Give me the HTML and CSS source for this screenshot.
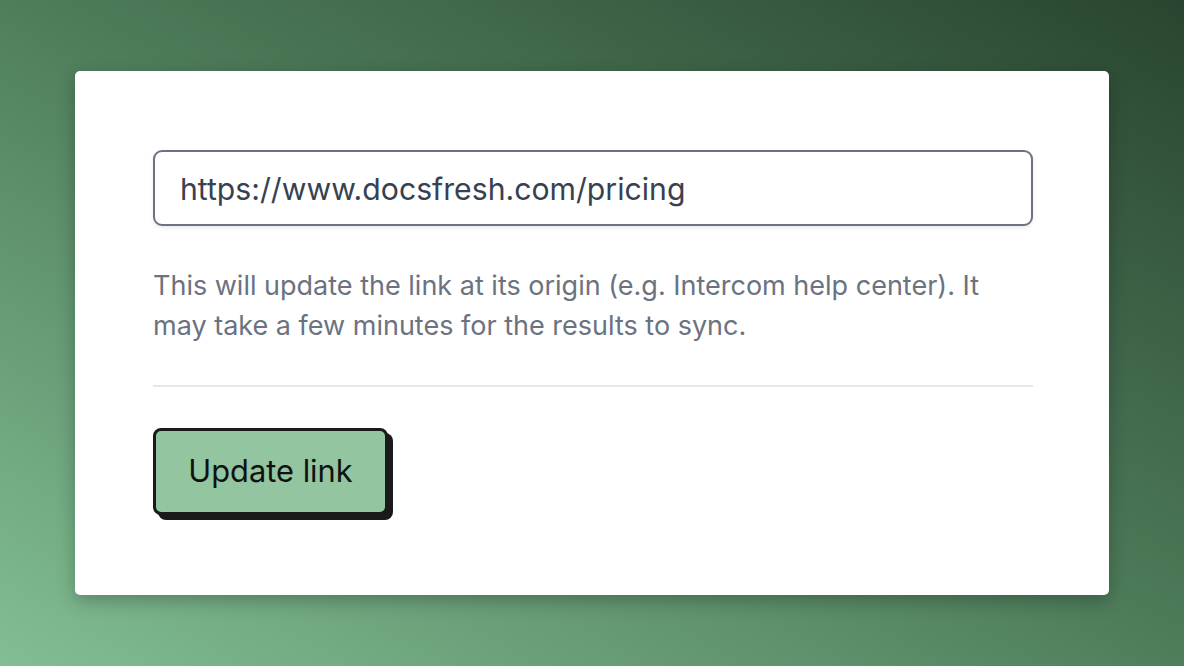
FILE: index.html
```html
<!DOCTYPE html>
<html lang="en">
<head>
<meta charset="utf-8">
<title>Update link</title>
<link rel="stylesheet" href="styles.css">
</head>
<body>
<main class="card">
  <input class="url-input" type="text" value="https://www.docsfresh.com/pricing">
  <p class="hint">This will update the link at its origin (e.g. Intercom help center). It may take a few minutes for the results to sync.</p>
  <hr class="divider">
  <div class="actions">
    <button class="btn" type="button">Update link</button>
  </div>
</main>
</body>
</html>
```
FILE: styles.css
```css
* { box-sizing: border-box; }
html, body { height: 100%; }
body {
  margin: 0;
  font-family: Inter, "Noto Sans", "Liberation Sans", sans-serif;
  background: linear-gradient(to top right, #82be93 0%, #4f7e5c 50%, #29452f 100%);
  display: flex;
  align-items: center;
  justify-content: center;
}
.card {
  width: 1034px;
  height: 524px;
  background: #fff;
  border-radius: 5px;
  box-shadow: 0 6px 18px rgba(0,0,0,0.25);
  padding: 79px 76px 0 78px;
  display: flex;
  flex-direction: column;
}
.url-input {
  width: 880px;
  height: 76px;
  border: 2px solid #6b7280;
  border-radius: 9px;
  padding: 2px 25px 0;
  font-family: inherit;
  font-size: 30.2px;
  color: #374151;
  box-shadow: 0 2px 4px rgba(0,0,0,0.08);
  outline: none;
}
.hint {
  margin: 40px 0 0;
  font-size: 27px;
  line-height: 40px;
  color: #6b7280;
}
.divider {
  margin: 39px 0 0;
  border: 0;
  height: 2px;
  background: #e5e7eb;
}
.actions {
  margin-top: 41px;
  display: flex;
}
.btn {
  width: 235px;
  height: 87px;
  background: #93c5a0;
  border: 3px solid #1a1a1a;
  border-radius: 8px;
  box-shadow: 5px 5px 0 #1a1a1a;
  font-family: inherit;
  font-size: 30.8px;
  color: #111;
  padding: 0 0 2px;
}
```
